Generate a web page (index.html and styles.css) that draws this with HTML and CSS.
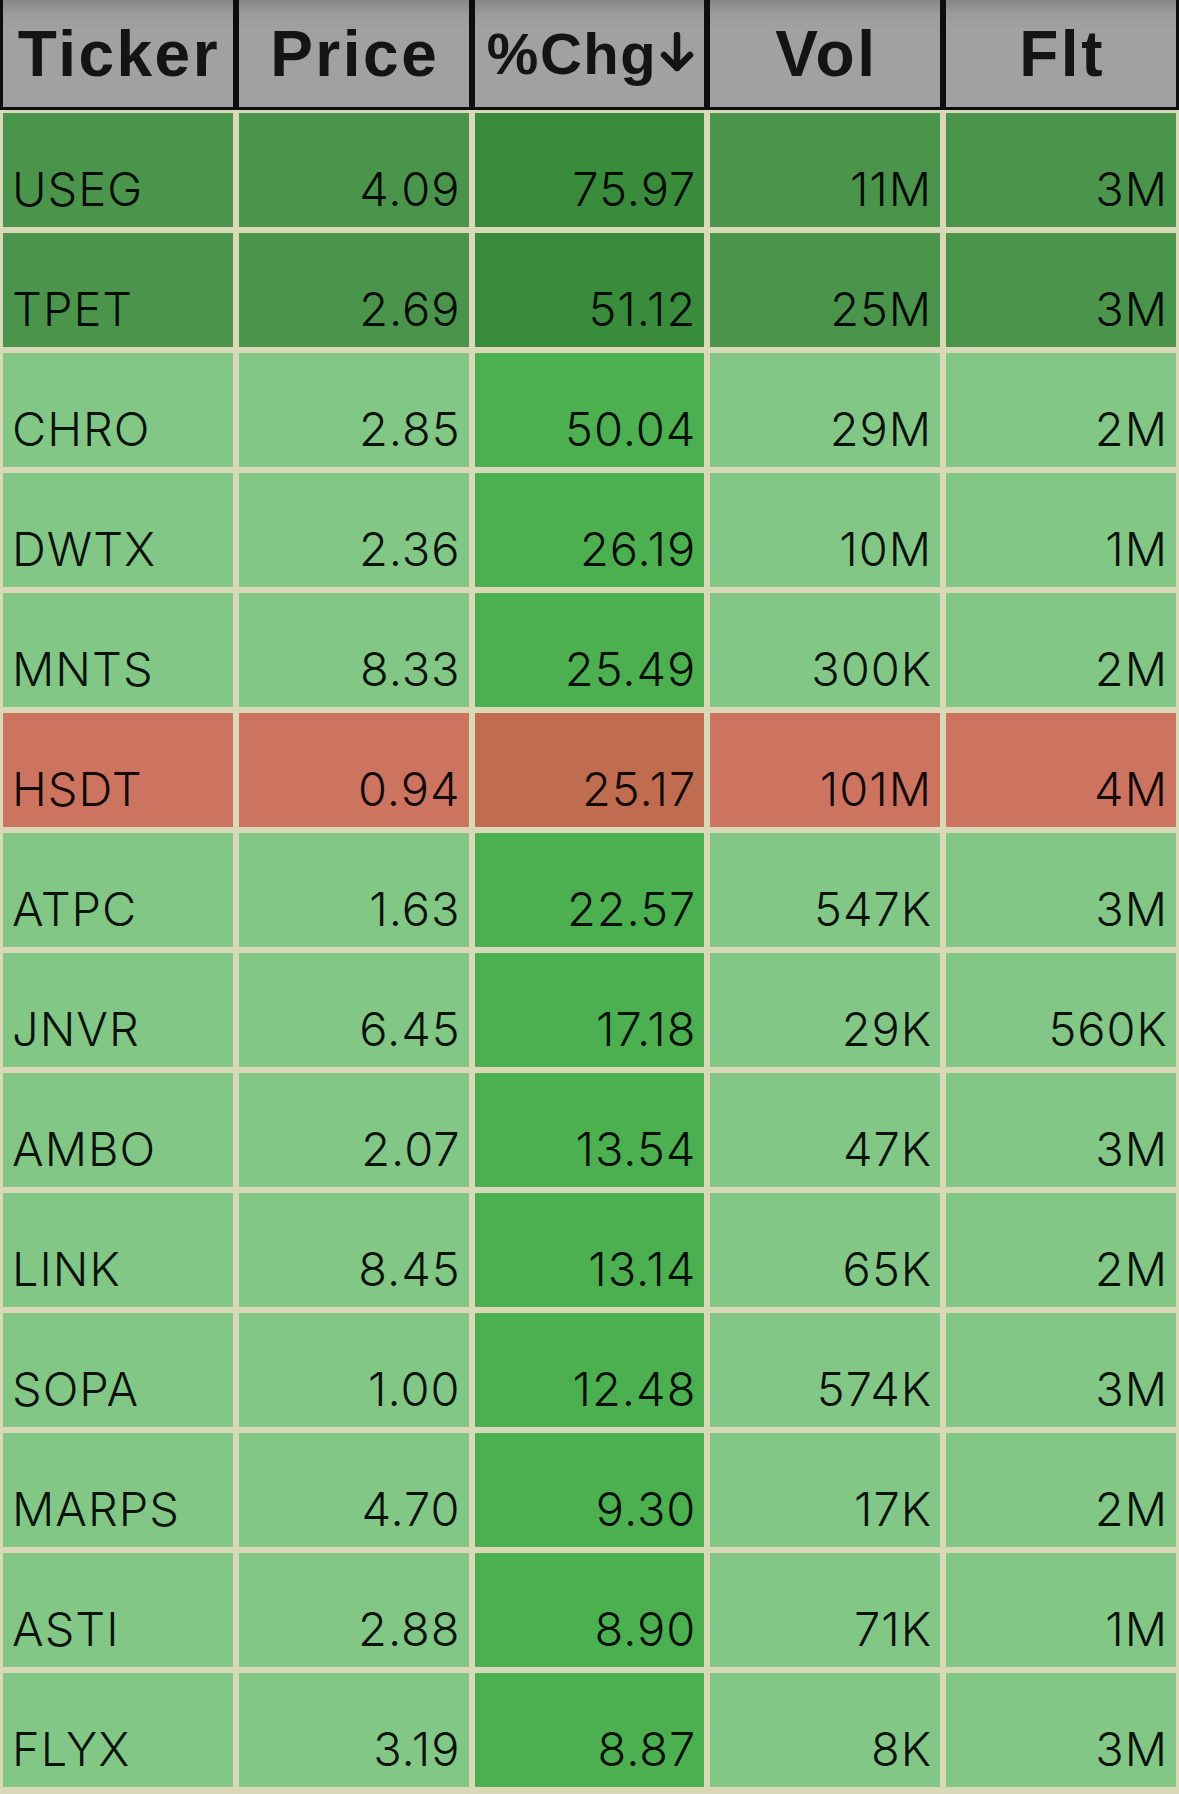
FILE: index.html
```html
<!DOCTYPE html>
<html lang="en">
<head>
<meta charset="utf-8">
<title>Gainers</title>
<link rel="stylesheet" href="styles.css">
</head>
<body>
<div class="screen">
  <div class="head">
    <div class="hcell">Ticker</div>
    <div class="hcell">Price</div>
    <div class="hcell hcell-sort">%Chg<svg class="arrow" viewBox="0 0 34 40" width="34" height="40" aria-hidden="true"><path d="M17 3 V36 M4 23 L17 36 L30 23" fill="none" stroke="#141414" stroke-width="6.5" stroke-linecap="round" stroke-linejoin="round"/></svg></div>
    <div class="hcell">Vol</div>
    <div class="hcell">Flt</div>
  </div>
  <div class="grid">
    <div class="cell up-strong sym">USEG</div><div class="cell up-strong num">4.09</div><div class="cell up-strong chg num">75.97</div><div class="cell up-strong num">11M</div><div class="cell up-strong num">3M</div>
    <div class="cell up-strong sym">TPET</div><div class="cell up-strong num">2.69</div><div class="cell up-strong chg num">51.12</div><div class="cell up-strong num">25M</div><div class="cell up-strong num">3M</div>
    <div class="cell up sym">CHRO</div><div class="cell up num">2.85</div><div class="cell up chg num">50.04</div><div class="cell up num">29M</div><div class="cell up num">2M</div>
    <div class="cell up sym">DWTX</div><div class="cell up num">2.36</div><div class="cell up chg num">26.19</div><div class="cell up num">10M</div><div class="cell up num">1M</div>
    <div class="cell up sym">MNTS</div><div class="cell up num">8.33</div><div class="cell up chg num">25.49</div><div class="cell up num">300K</div><div class="cell up num">2M</div>
    <div class="cell down sym">HSDT</div><div class="cell down num">0.94</div><div class="cell down chg num">25.17</div><div class="cell down num">101M</div><div class="cell down num">4M</div>
    <div class="cell up sym">ATPC</div><div class="cell up num">1.63</div><div class="cell up chg num">22.57</div><div class="cell up num">547K</div><div class="cell up num">3M</div>
    <div class="cell up sym">JNVR</div><div class="cell up num">6.45</div><div class="cell up chg num">17.18</div><div class="cell up num">29K</div><div class="cell up num">560K</div>
    <div class="cell up sym">AMBO</div><div class="cell up num">2.07</div><div class="cell up chg num">13.54</div><div class="cell up num">47K</div><div class="cell up num">3M</div>
    <div class="cell up sym">LINK</div><div class="cell up num">8.45</div><div class="cell up chg num">13.14</div><div class="cell up num">65K</div><div class="cell up num">2M</div>
    <div class="cell up sym">SOPA</div><div class="cell up num">1.00</div><div class="cell up chg num">12.48</div><div class="cell up num">574K</div><div class="cell up num">3M</div>
    <div class="cell up sym">MARPS</div><div class="cell up num">4.70</div><div class="cell up chg num">9.30</div><div class="cell up num">17K</div><div class="cell up num">2M</div>
    <div class="cell up sym">ASTI</div><div class="cell up num">2.88</div><div class="cell up chg num">8.90</div><div class="cell up num">71K</div><div class="cell up num">1M</div>
    <div class="cell up sym">FLYX</div><div class="cell up num">3.19</div><div class="cell up chg num">8.87</div><div class="cell up num">8K</div><div class="cell up num">3M</div>
  </div>
</div>
</body>
</html>
```
FILE: styles.css
```css
html, body {
  margin: 0;
  padding: 0;
}
body {
  background: #d9d9b8;
  width: 1179px;
  height: 1794px;
  overflow: hidden;
  font-family: "Liberation Sans", Arial, sans-serif;
}
.screen {
  display: flex;
  flex-direction: column;
}
.head {
  display: grid;
  grid-template-columns: repeat(5, 1fr);
  column-gap: 6px;
  padding: 0 3px 3px 3px;
  background: #0d0d0d;
  height: 107px;
}
.hcell {
  display: flex;
  align-items: center;
  justify-content: center;
  background: linear-gradient(#878787 0px, #9b9b9b 14px, #a1a1a1 30px, #a1a1a1 100%);
  color: #141414;
  font-weight: 700;
  font-size: 64px;
  letter-spacing: 2.5px;
  padding-left: 2px;
  white-space: nowrap;
}
.hcell-sort {
  font-size: 58px;
  letter-spacing: 1.5px;
}
.arrow {
  display: block;
  margin: 0 0 0 3px;
  transform: translateY(-2px);
}
.grid {
  display: grid;
  grid-template-columns: repeat(5, 1fr);
  grid-auto-rows: 114px;
  gap: 6px;
  padding: 3px;
}
.cell {
  display: flex;
  align-items: flex-end;
  padding: 0 8px 10px 9px;
  font-family: Inter, "Liberation Sans", sans-serif;
  font-size: 47px;
  font-weight: 300;
  letter-spacing: 1px;
  color: rgba(0, 0, 0, 0.92);
  white-space: nowrap;
}
.sym {
  justify-content: flex-start;
}
.num {
  justify-content: flex-end;
}
.up-strong { background: #4a944c; }
.up-strong.chg { background: #388c3c; }
.up { background: #82c786; }
.up.chg { background: #4caf50; }
.down { background: #cd7461; }
.down.chg { background: #c06c50; }
```
